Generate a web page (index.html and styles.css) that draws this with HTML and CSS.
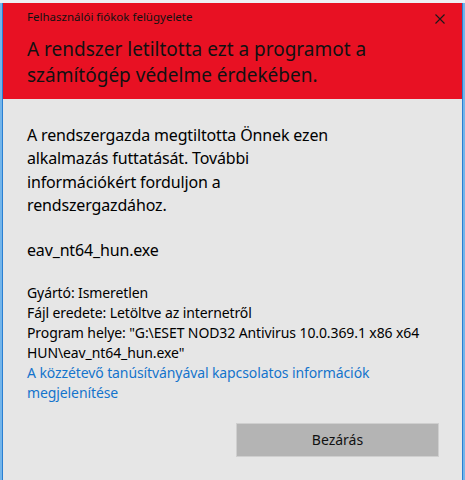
FILE: index.html
```html
<!DOCTYPE html>
<html lang="hu">
<head>
<meta charset="utf-8">
<title>Felhasználói fiókok felügyelete</title>
<link rel="stylesheet" href="styles.css">
</head>
<body>
<div class="screen">
  <div class="dialog">
    <header class="banner">
      <div class="titlebar">
        <span class="title">Felhasználói fiókok felügyelete</span>
        <button class="close" aria-label="Bezárás">
          <svg width="10" height="10" viewBox="0 0 10 10"><path d="M0.5 0.5 L9.5 9.5 M9.5 0.5 L0.5 9.5" stroke="#1a1a1a" stroke-width="1.1" fill="none"/></svg>
        </button>
      </div>
      <h1 class="headline">A rendszer letiltotta ezt a programot a<br>számítógép védelme érdekében.</h1>
    </header>
    <main class="content">
      <p class="message">A rendszergazda megtiltotta Önnek ezen<br>alkalmazás futtatását. További<br>információkért forduljon a<br>rendszergazdához.</p>
      <p class="filename">eav_nt64_hun.exe</p>
      <div class="details">
        <div>Gyártó: Ismeretlen</div>
        <div>Fájl eredete: Letöltve az internetről</div>
        <div>Program helye: "G:\ESET NOD32 Antivirus 10.0.369.1 x86 x64<br>HUN\eav_nt64_hun.exe"</div>
        <a class="link" href="#">A közzétevő tanúsítványával kapcsolatos információk<br>megjelenítése</a>
      </div>
      <div class="actions">
        <button class="btn">Bezárás</button>
      </div>
    </main>
  </div>
</div>
</body>
</html>
```

FILE: styles.css
```css
* { box-sizing: border-box; }
html, body { margin: 0; padding: 0; }
body {
  width: 465px;
  height: 480px;
  overflow: hidden;
  font-family: "Noto Sans", "Open Sans", sans-serif;
  background: #74b5ea;
}
.screen {
  height: 480px;
  padding: 3px 2px 0 2px;
  background: linear-gradient(#eef1f5 0, #eef1f5 3px, #74b5ea 3px);
  display: flex;
}
.dialog {
  flex: 1;
  display: flex;
  flex-direction: column;
  border-left: 1px solid #2a7fd2;
  border-right: 1px solid #2a7fd2;
  background: #e6e6e6;
}
.banner {
  background: #e81123;
  color: #111;
  padding: 6px 17px 11px 24px;
}
.titlebar {
  display: flex;
  align-items: center;
  justify-content: space-between;
  height: 16px;
}
.title {
  font-size: 11.5px;
  line-height: 16px;
}
.close {
  border: 0;
  background: transparent;
  padding: 0;
  width: 10px;
  height: 10px;
  display: flex;
  margin-top: 4px;
}
.headline {
  margin: 11px 0 0 0;
  font-size: 19px;
  font-weight: normal;
  line-height: 26px;
}
.content {
  flex: 1;
  padding: 25px 24px 0 24px;
  color: #000;
}
.message {
  margin: 0;
  font-size: 16px;
  letter-spacing: -0.15px;
  line-height: 23.33px;
}
.filename {
  margin: 22px 0 0 0;
  font-size: 16px;
  letter-spacing: -0.15px;
  line-height: 23.33px;
}
.details {
  margin-top: 20px;
  font-size: 14px;
  letter-spacing: -0.1px;
  line-height: 20px;
}
.link {
  display: block;
  color: #1474cc;
  text-decoration: none;
}
.actions {
  display: flex;
  justify-content: flex-end;
  margin-top: 20px;
}
.btn {
  width: 203px;
  height: 34px;
  margin-right: -1px;
  border: 1px solid #cfcfcf;
  background: #b4b4b4;
  font-family: "Noto Sans", "Open Sans", sans-serif;
  font-size: 14px;
  color: #111;
  padding: 0;
}
```
